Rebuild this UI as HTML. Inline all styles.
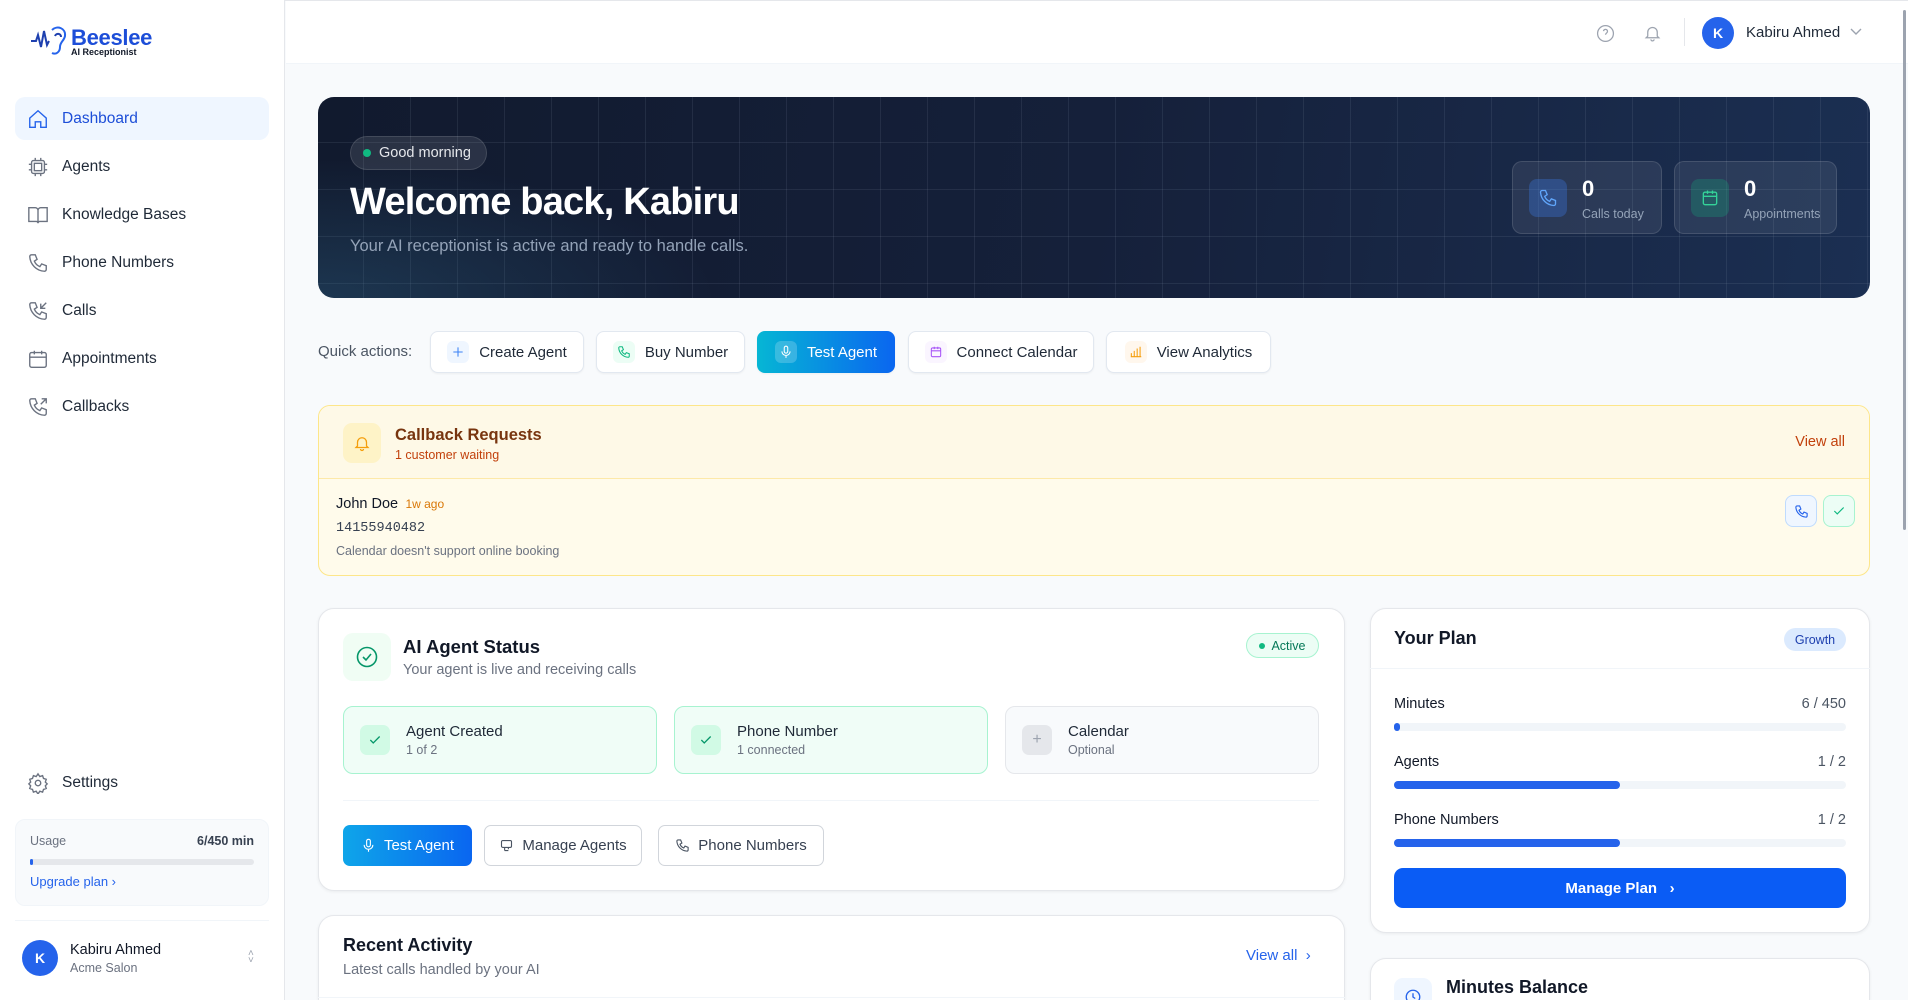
<!DOCTYPE html>
<html style="overflow:hidden;height:1000px"><head><meta charset="utf-8"><style>
*{box-sizing:border-box;margin:0;padding:0}
body{width:1908px;height:1000px;overflow:hidden;font-family:"Liberation Sans",sans-serif;background:#f8fafc;position:relative;color:#0f172a}
.a{position:absolute}
.sb{left:0;top:0;width:285px;height:1000px;background:#fff;border-right:1px solid #e5e7eb}
.nav{left:15px;width:254px;height:43px;border-radius:10px;display:flex;align-items:center;padding-left:12px;font-size:15.5px;color:#1f2937}
.nav svg{width:22px;height:22px;margin-right:13px;stroke:#6b7280;fill:none;stroke-width:1.5}
.card{background:#fff;border:1px solid #e5e7eb;border-radius:16px;box-shadow:0 1px 3px rgba(0,0,0,.06)}
.qa{top:331px;height:42px;background:#fff;border:1px solid #e2e8f0;border-radius:8px;display:flex;align-items:center;justify-content:center;font-size:15px;color:#1f2937;gap:10px;box-shadow:0 1px 2px rgba(0,0,0,.05)}
.ic{width:22px;height:22px;border-radius:6px;display:flex;align-items:center;justify-content:center}
.ic svg{width:14px;height:14px;fill:none;stroke-width:1.8}
.step{top:706px;height:68px;width:314px;border-radius:10px;display:flex;align-items:center;padding-left:16px}
.step .b{width:30px;height:30px;border-radius:7px;display:flex;align-items:center;justify-content:center;margin-right:16px}
.step .t{font-size:15px;color:#1f2937}
.step .s{font-size:12.5px;color:#6b7280;margin-top:3px}
.btn{top:825px;height:41px;border-radius:7px;display:flex;align-items:center;justify-content:center;gap:8px;font-size:15px}
.bar{left:1394px;width:452px;height:8px;border-radius:4px;background:#f1f5f9}
.bar i{display:block;height:8px;border-radius:4px;background:#2563eb}
</style></head><body>
<div style="position:absolute;left:0;top:0;width:1908px;height:1px;background:#e5e7eb"></div>
<!-- sidebar -->
<div class="a sb">
  <svg class="a" style="left:30px;top:24px" width="42" height="34" viewBox="0 0 42 34" fill="none" stroke="#1e40af" stroke-width="2"><path d="M1 17h5l2-6 3 12 3-16 3 14 2-4"/><path d="M22 6c5-5 14-2 13 6-1 5-5 6-5 11 0 5-4 8-8 6" stroke="#2563eb"/><path d="M25 12c1-3 6-3 6 1"/></svg>
  <div class="a" style="left:71px;top:25px;font-size:22px;font-weight:bold;color:#1d4ed8;letter-spacing:-.3px">Beeslee</div>
  <div class="a" style="left:71px;top:47px;font-size:9px;font-weight:bold;color:#111827">AI Receptionist</div>

  <div class="a nav" style="top:97px;background:#eff6ff;color:#1d4ed8"><svg viewBox="0 0 24 24" style="stroke:#2563eb"><path d="M3 11l9-8 9 8v10h-6v-6h-6v6H3z"/></svg>Dashboard</div>
  <div class="a nav" style="top:145px"><svg viewBox="0 0 24 24"><rect x="5" y="5" width="14" height="14" rx="2"/><rect x="8" y="8" width="8" height="8"/><path d="M9 2v3M15 2v3M9 19v3M15 19v3M2 9h3M2 15h3M19 9h3M19 15h3"/></svg>Agents</div>
  <div class="a nav" style="top:193px"><svg viewBox="0 0 24 24"><path d="M2 4h7a3 3 0 013 3v14a2 2 0 00-2-2H2zM22 4h-7a3 3 0 00-3 3v14a2 2 0 012-2h8z"/></svg>Knowledge Bases</div>
  <div class="a nav" style="top:241px"><svg viewBox="0 0 24 24"><path d="M5 3h4l2 5-3 2a11 11 0 006 6l2-3 5 2v4a2 2 0 01-2 2A17 17 0 013 5a2 2 0 012-2z"/></svg>Phone Numbers</div>
  <div class="a nav" style="top:289px"><svg viewBox="0 0 24 24"><path d="M5 3h4l2 5-3 2a11 11 0 006 6l2-3 5 2v4a2 2 0 01-2 2A17 17 0 013 5a2 2 0 012-2zM21 3l-6 6M15 4v5h5"/></svg>Calls</div>
  <div class="a nav" style="top:337px"><svg viewBox="0 0 24 24"><rect x="3" y="5" width="18" height="16" rx="2"/><path d="M3 10h18M8 3v4M16 3v4"/></svg>Appointments</div>
  <div class="a nav" style="top:385px"><svg viewBox="0 0 24 24"><path d="M5 3h4l2 5-3 2a11 11 0 006 6l2-3 5 2v4a2 2 0 01-2 2A17 17 0 013 5a2 2 0 012-2zM15 9l6-6M16 3h5v5"/></svg>Callbacks</div>
  <div class="a nav" style="top:761px"><svg viewBox="0 0 24 24"><circle cx="12" cy="12" r="3"/><path d="M12 2l2 3 3-1 1 3 3 1-1 3 2 2-2 2 1 3-3 1-1 3-3-1-2 3-2-3-3 1-1-3-3-1 1-3-2-2 2-2-1-3 3-1 1-3 3 1z"/></svg>Settings</div>

  <div class="a" style="left:15px;top:819px;width:254px;height:87px;background:#f8fafc;border-radius:10px;border:1px solid #f1f5f9">
    <div class="a" style="left:14px;top:14px;font-size:12.5px;color:#6b7280">Usage</div>
    <div class="a" style="right:14px;top:14px;font-size:12.5px;font-weight:bold;color:#374151">6/450 min</div>
    <div class="a" style="left:14px;top:39px;width:224px;height:6px;border-radius:3px;background:#e5e7eb"><i style="display:block;width:3px;height:6px;background:#2563eb;border-radius:3px"></i></div>
    <div class="a" style="left:14px;top:54px;font-size:13px;color:#2563eb">Upgrade plan ›</div>
  </div>
  <div class="a" style="left:15px;top:920px;width:254px;height:1px;background:#f1f5f9"></div>
  <div class="a" style="left:22px;top:940px;width:36px;height:36px;border-radius:50%;background:#2563eb;color:#fff;font-weight:bold;font-size:14px;display:flex;align-items:center;justify-content:center">K</div>
  <div class="a" style="left:70px;top:942px;font-size:14.5px;color:#111827">Kabiru Ahmed</div>
  <div class="a" style="left:70px;top:961px;font-size:12.5px;color:#6b7280">Acme Salon</div>
  <div class="a" style="left:248px;top:950px;font-size:10px;color:#9ca3af;line-height:7px">˄<br>˅</div>
</div>
<!-- header -->
<div class="a" style="left:286px;top:1px;width:1622px;height:63px;background:#fff;border-bottom:1px solid #f1f5f9"></div>
<svg class="a" style="left:1596px;top:24px" width="19" height="19" viewBox="0 0 24 24" fill="none" stroke="#9ca3af" stroke-width="1.6"><circle cx="12" cy="12" r="10"/><path d="M9.5 9a2.5 2.5 0 015 .5c0 2-2.5 2-2.5 4M12 17h.01"/></svg>
<svg class="a" style="left:1643px;top:23px" width="19" height="20" viewBox="0 0 24 24" fill="none" stroke="#9ca3af" stroke-width="1.6"><path d="M6 16V11a6 6 0 0112 0v5l2 2H4zM10 20a2 2 0 004 0"/></svg>
<div class="a" style="left:1684px;top:18px;width:1px;height:28px;background:#e5e7eb"></div>
<div class="a" style="left:1702px;top:17px;width:32px;height:32px;border-radius:50%;background:#2563eb;color:#fff;font-weight:bold;font-size:14px;display:flex;align-items:center;justify-content:center">K</div>
<div class="a" style="left:1746px;top:24px;font-size:15px;color:#1f2937">Kabiru Ahmed</div>
<svg class="a" style="left:1850px;top:28px" width="12" height="8" viewBox="0 0 12 8" fill="none" stroke="#9ca3af" stroke-width="1.4"><path d="M1 1l5 5 5-5"/></svg>
<div class="a" style="left:1903px;top:10px;width:3px;height:520px;background:#9ca3af;border-radius:2px"></div>

<!-- hero -->
<div class="a" style="left:318px;top:97px;width:1552px;height:201px;border-radius:16px;overflow:hidden;background:linear-gradient(100deg,#111a2e 0%,#15203a 50%,#1b2f52 100%)">
  <div class="a" style="inset:0;background-image:linear-gradient(rgba(148,163,184,.12) 1px,transparent 1px),linear-gradient(90deg,rgba(148,163,184,.12) 1px,transparent 1px);background-size:47px 47px;background-position:-2px -2px"></div>
  <div class="a" style="left:0;bottom:0;width:400px;height:140px;background:radial-gradient(ellipse at 0% 100%,rgba(56,120,160,.3),transparent 70%)"></div>
  <div class="a" style="left:32px;top:39px;height:34px;width:137px;border-radius:17px;background:rgba(255,255,255,.1);border:1px solid rgba(255,255,255,.12);display:flex;align-items:center;padding-left:12px;font-size:14.5px;color:#e5e7eb"><i style="width:8px;height:8px;border-radius:50%;background:#10b981;margin-right:8px"></i>Good morning</div>
  <div class="a" style="left:32px;top:84px;font-size:38px;font-weight:bold;color:#fff;letter-spacing:-.8px">Welcome back, Kabiru</div>
  <div class="a" style="left:32px;top:140px;font-size:16.5px;color:#94a3b8">Your AI receptionist is active and ready to handle calls.</div>
  <div class="a" style="left:1194px;top:64px;width:150px;height:73px;border-radius:10px;background:rgba(255,255,255,.08);border:1px solid rgba(255,255,255,.12)">
    <div class="a" style="left:16px;top:17px;width:38px;height:38px;border-radius:8px;background:rgba(59,130,246,.3);display:flex;align-items:center;justify-content:center"><svg width="20" height="20" viewBox="0 0 24 24" fill="none" stroke="#60a5fa" stroke-width="1.6"><path d="M5 3h4l2 5-3 2a11 11 0 006 6l2-3 5 2v4a2 2 0 01-2 2A17 17 0 013 5a2 2 0 012-2z"/></svg></div>
    <div class="a" style="left:69px;top:14px;font-size:22px;font-weight:bold;color:#fff">0</div>
    <div class="a" style="left:69px;top:45px;font-size:12.5px;color:#94a3b8">Calls today</div>
  </div>
  <div class="a" style="left:1356px;top:64px;width:163px;height:73px;border-radius:10px;background:rgba(255,255,255,.08);border:1px solid rgba(255,255,255,.12)">
    <div class="a" style="left:16px;top:17px;width:38px;height:38px;border-radius:8px;background:rgba(16,185,129,.25);display:flex;align-items:center;justify-content:center"><svg width="20" height="20" viewBox="0 0 24 24" fill="none" stroke="#34d399" stroke-width="1.6"><rect x="4" y="5" width="16" height="15" rx="2"/><path d="M4 10h16M9 3v4M15 3v4"/></svg></div>
    <div class="a" style="left:69px;top:14px;font-size:22px;font-weight:bold;color:#fff">0</div>
    <div class="a" style="left:69px;top:45px;font-size:12.5px;color:#94a3b8">Appointments</div>
  </div>
</div>

<!-- quick actions -->
<div class="a" style="left:318px;top:343px;font-size:15px;color:#4b5563">Quick actions:</div>
<div class="a qa" style="left:430px;width:154px"><span class="ic" style="background:#eff6ff"><svg viewBox="0 0 24 24" stroke="#3b82f6"><path d="M12 4v16M4 12h16"/></svg></span>Create Agent</div>
<div class="a qa" style="left:596px;width:149px"><span class="ic" style="background:#ecfdf5"><svg viewBox="0 0 24 24" stroke="#10b981"><path d="M5 3h4l2 5-3 2a11 11 0 006 6l2-3 5 2v4a2 2 0 01-2 2A17 17 0 013 5a2 2 0 012-2z"/></svg></span>Buy Number</div>
<div class="a qa" style="left:757px;width:138px;background:linear-gradient(90deg,#06b6d4,#0a66f0);border:none;color:#fff"><span class="ic" style="background:rgba(255,255,255,.2)"><svg viewBox="0 0 24 24" stroke="#fff"><rect x="9" y="2" width="6" height="12" rx="3"/><path d="M5 11a7 7 0 0014 0M12 18v4"/></svg></span>Test Agent</div>
<div class="a qa" style="left:908px;width:186px"><span class="ic" style="background:#faf5ff"><svg viewBox="0 0 24 24" stroke="#a855f7"><rect x="4" y="5" width="16" height="15" rx="2"/><path d="M4 10h16M9 3v4M15 3v4"/></svg></span>Connect Calendar</div>
<div class="a qa" style="left:1106px;width:165px"><span class="ic" style="background:#fff7ed"><svg viewBox="0 0 24 24" stroke="#f59e0b"><path d="M4 20V14M9 20V10M14 20V6M19 20V3M3 20h18"/></svg></span>View Analytics</div>

<!-- callback -->
<div class="a" style="left:318px;top:405px;width:1552px;height:171px;background:#fffbeb;border:1px solid #fde68a;border-radius:12px;overflow:hidden">
  <div class="a" style="left:0;top:0;width:100%;height:73px;background:#fef9e7;border-bottom:1px solid #fde9a8"></div>
  <div class="a" style="left:24px;top:17px;width:38px;height:40px;border-radius:9px;background:#fef3c7;display:flex;align-items:center;justify-content:center"><svg width="18" height="18" viewBox="0 0 24 24" fill="none" stroke="#f59e0b" stroke-width="1.7"><path d="M6 16V11a6 6 0 0112 0v5l2 2H4zM10 20a2 2 0 004 0"/></svg></div>
  <div class="a" style="left:76px;top:20px;font-size:16.5px;font-weight:bold;color:#78350f">Callback Requests</div>
  <div class="a" style="left:76px;top:42px;font-size:12.5px;color:#c2410c">1 customer waiting</div>
  <div class="a" style="right:24px;top:28px;font-size:14.5px;color:#c2410c">View all</div>
  <div class="a" style="left:17px;top:90px;font-size:14.5px;color:#111827">John Doe <span style="font-size:12px;color:#d97706">&nbsp;1w ago</span></div>
  <div class="a" style="left:17px;top:115px;font-size:13.5px;font-family:'Liberation Mono',monospace;color:#374151">14155940482</div>
  <div class="a" style="left:17px;top:138px;font-size:12.5px;color:#6b7280">Calendar doesn't support online booking</div>
  <div class="a" style="left:1466px;top:89px;width:32px;height:32px;border-radius:8px;background:#eff6ff;border:1px solid #bfdbfe;display:flex;align-items:center;justify-content:center"><svg width="15" height="15" viewBox="0 0 24 24" fill="none" stroke="#2563eb" stroke-width="1.8"><path d="M5 3h4l2 5-3 2a11 11 0 006 6l2-3 5 2v4a2 2 0 01-2 2A17 17 0 013 5a2 2 0 012-2z"/></svg></div>
  <div class="a" style="left:1504px;top:89px;width:32px;height:32px;border-radius:8px;background:#ecfdf5;border:1px solid #a7f3d0;display:flex;align-items:center;justify-content:center"><svg width="14" height="14" viewBox="0 0 24 24" fill="none" stroke="#10b981" stroke-width="2"><path d="M4 12l5 5L20 6"/></svg></div>
</div>

<!-- agent status -->
<div class="a card" style="left:318px;top:608px;width:1027px;height:283px"></div>
<div class="a" style="left:343px;top:633px;width:48px;height:48px;border-radius:10px;background:#f0fdf4;display:flex;align-items:center;justify-content:center"><svg width="24" height="24" viewBox="0 0 24 24" fill="none" stroke="#059669" stroke-width="1.6"><circle cx="12" cy="12" r="9.5"/><path d="M8 12l3 3 5-6"/></svg></div>
<div class="a" style="left:403px;top:636px;font-size:18.5px;font-weight:bold;color:#111827">AI Agent Status</div>
<div class="a" style="left:403px;top:662px;font-size:14.5px;color:#6b7280">Your agent is live and receiving calls</div>
<div class="a" style="left:1246px;top:633px;width:73px;height:25px;border-radius:13px;background:#ecfdf5;border:1px solid #a7f3d0;display:flex;align-items:center;justify-content:center;font-size:12.5px;color:#047857"><i style="width:6px;height:6px;border-radius:50%;background:#10b981;margin-right:6px"></i>Active</div>
<div class="a step" style="left:343px;background:#f0fdf7;border:1px solid #a7f3d0"><div class="b" style="background:#d1fae5"><svg width="14" height="14" viewBox="0 0 24 24" fill="none" stroke="#059669" stroke-width="2.2"><path d="M4 12l5 5L20 6"/></svg></div><div><div class="t">Agent Created</div><div class="s">1 of 2</div></div></div>
<div class="a step" style="left:674px;background:#f0fdf7;border:1px solid #a7f3d0"><div class="b" style="background:#d1fae5"><svg width="14" height="14" viewBox="0 0 24 24" fill="none" stroke="#059669" stroke-width="2.2"><path d="M4 12l5 5L20 6"/></svg></div><div><div class="t">Phone Number</div><div class="s">1 connected</div></div></div>
<div class="a step" style="left:1005px;background:#f8fafc;border:1px solid #e5e7eb"><div class="b" style="background:#e5e7eb;color:#9ca3af;font-size:16px">+</div><div><div class="t">Calendar</div><div class="s">Optional</div></div></div>
<div class="a" style="left:343px;top:800px;width:976px;height:1px;background:#f1f5f9"></div>
<div class="a btn" style="left:343px;width:129px;background:linear-gradient(90deg,#0ea5e9,#0a66f0);color:#fff"><svg width="15" height="15" viewBox="0 0 24 24" fill="none" stroke="#fff" stroke-width="1.8"><rect x="9" y="2" width="6" height="12" rx="3"/><path d="M5 11a7 7 0 0014 0M12 18v4"/></svg>Test Agent</div>
<div class="a btn" style="left:484px;width:158px;background:#fff;border:1px solid #d1d5db;color:#374151"><svg width="15" height="15" viewBox="0 0 24 24" fill="none" stroke="#4b5563" stroke-width="1.8"><rect x="4" y="4" width="16" height="11" rx="2"/><path d="M9 15v5M15 15v3M9 20h6"/></svg>Manage Agents</div>
<div class="a btn" style="left:658px;width:166px;background:#fff;border:1px solid #d1d5db;color:#374151"><svg width="15" height="15" viewBox="0 0 24 24" fill="none" stroke="#4b5563" stroke-width="1.8"><path d="M5 3h4l2 5-3 2a11 11 0 006 6l2-3 5 2v4a2 2 0 01-2 2A17 17 0 013 5a2 2 0 012-2z"/></svg>Phone Numbers</div>

<!-- recent -->
<div class="a card" style="left:318px;top:915px;width:1027px;height:85px;border-bottom:none;border-radius:16px 16px 0 0"></div>
<div class="a" style="left:343px;top:935px;font-size:18px;font-weight:bold;color:#111827">Recent Activity</div>
<div class="a" style="left:343px;top:962px;font-size:14.5px;color:#6b7280">Latest calls handled by your AI</div>
<div class="a" style="left:1246px;top:947px;font-size:15px;color:#2563eb">View all &nbsp;›</div>
<div class="a" style="left:318px;top:997px;width:1027px;height:1px;background:#f1f5f9"></div>

<!-- plan -->
<div class="a card" style="left:1370px;top:608px;width:500px;height:325px"></div>
<div class="a" style="left:1394px;top:628px;font-size:18px;font-weight:bold;color:#111827">Your Plan</div>
<div class="a" style="left:1784px;top:628px;width:62px;height:23px;border-radius:12px;background:#dbeafe;font-size:12.5px;color:#1e40af;display:flex;align-items:center;justify-content:center">Growth</div>
<div class="a" style="left:1370px;top:668px;width:500px;height:1px;background:#f1f5f9"></div>
<div class="a" style="left:1394px;top:696px;font-size:14.5px;color:#111827">Minutes</div><div class="a" style="right:62px;top:696px;font-size:14.5px;color:#4b5563">6 / 450</div>
<div class="a bar" style="top:723px"><i style="width:6px"></i></div>
<div class="a" style="left:1394px;top:754px;font-size:14.5px;color:#111827">Agents</div><div class="a" style="right:62px;top:754px;font-size:14.5px;color:#4b5563">1 / 2</div>
<div class="a bar" style="top:781px"><i style="width:226px"></i></div>
<div class="a" style="left:1394px;top:812px;font-size:14.5px;color:#111827">Phone Numbers</div><div class="a" style="right:62px;top:812px;font-size:14.5px;color:#4b5563">1 / 2</div>
<div class="a bar" style="top:839px"><i style="width:226px"></i></div>
<div class="a" style="left:1394px;top:868px;width:452px;height:40px;border-radius:9px;background:#0a5cf5;color:#fff;font-size:15px;font-weight:bold;display:flex;align-items:center;justify-content:center">Manage Plan &nbsp;&nbsp;›</div>

<!-- minutes balance -->
<div class="a card" style="left:1370px;top:958px;width:500px;height:42px;border-bottom:none;border-radius:16px 16px 0 0;overflow:hidden"></div>
<div class="a" style="left:1394px;top:978px;width:38px;height:22px;border-radius:9px 9px 0 0;background:#eff6ff;overflow:hidden"><svg style="position:absolute;left:10px;top:10px" width="18" height="18" viewBox="0 0 24 24" fill="none" stroke="#2563eb" stroke-width="1.8"><circle cx="12" cy="12" r="9"/><path d="M12 7v5l3 2"/></svg></div>
<div class="a" style="left:1446px;top:977px;font-size:18px;font-weight:bold;color:#111827">Minutes Balance</div>
</body></html>
